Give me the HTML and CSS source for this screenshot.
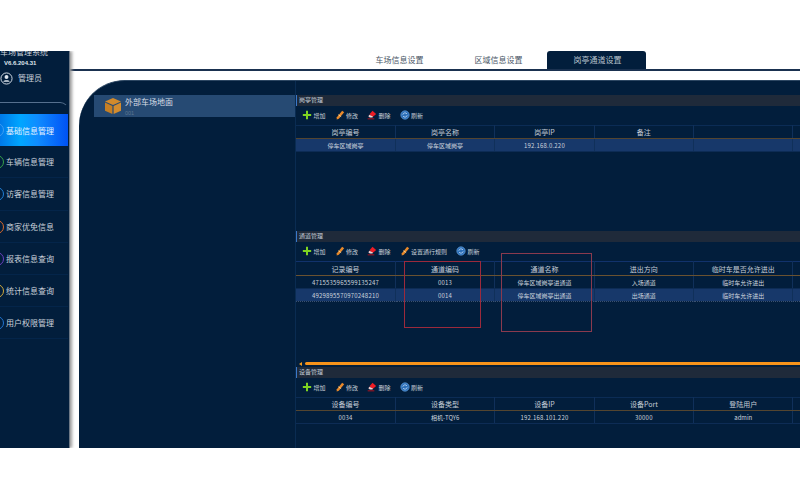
FILE: index.html
```html
<!DOCTYPE html>
<html lang="zh-CN">
<head>
<meta charset="utf-8">
<title>车场管理系统</title>
<link rel="stylesheet" href="styles.css">
</head>
<body>
<svg class="defs" width="0" height="0" aria-hidden="true">
  <symbol id="i-add" viewBox="0 0 12 12"><path d="M4.8 1h2.4v3.8H11v2.4H7.2V11H4.8V7.2H1V4.8h3.8z" fill="#7ed321"/></symbol>
  <symbol id="i-edit" viewBox="0 0 12 12"><path d="M8.6 1 11 2.6 4.6 10.4 2 11.4l.2-2.8z" fill="#e8892a"/><path d="M4 5.600 7.400 8" stroke="#f8d9a0" stroke-width="1"/></symbol>
  <symbol id="i-del" viewBox="0 0 12 12"><path d="M6.600 1 11 4.800 6.800 8.400 3 5z" fill="#ee1c25"/><path d="M3 5.600 1.600 7.600 3.400 9h3l1-1" fill="#f2d0d0"/><path d="M.8 10.600h8" stroke="#d21018" stroke-width="1"/></symbol>
  <symbol id="i-ref" viewBox="0 0 12 12"><circle cx="6" cy="6" r="5" fill="#2c6fb8" stroke="#6aa6e6" stroke-width=".8"/><path d="M3.400 5.600a2.700 2.700 0 0 1 5-.8M8.600 6.400a2.700 2.700 0 0 1-5 .8" fill="none" stroke="#cfe3fb" stroke-width=".9"/></symbol>
</svg>
<div class="page">
  <aside class="side">
    <div class="brand">车场管理系统</div>
    <div class="ver">V6.6.204.31</div>
    <div class="user">
      <svg class="user-ic" viewBox="0 0 14 14"><circle cx="7" cy="7" r="6" fill="none" stroke="#dfe6ee" stroke-width="1"/><circle cx="7" cy="5.400" r="2.100" fill="#dfe6ee"/><path d="M3.600 10.400c.6-2 6.200-2 6.800 0z" fill="#dfe6ee"/></svg>
      <span>管理员</span>
    </div>
    <nav class="menu">
      <a class="mi on"><i class="ring r1"></i>基础信息管理</a>
      <a class="mi"><i class="ring r2"></i>车辆信息管理</a>
      <a class="mi"><i class="ring r3"></i>访客信息管理</a>
      <a class="mi"><i class="ring r4"></i>商家优免信息</a>
      <a class="mi"><i class="ring r5"></i>报表信息查询</a>
      <a class="mi"><i class="ring r6"></i>统计信息查询</a>
      <a class="mi"><i class="ring r7"></i>用户权限管理</a>
    </nav>
  </aside>
  <main class="main">
    <div class="tabs">
      <a class="tab">车场信息设置</a>
      <a class="tab">区域信息设置</a>
      <a class="tab act">岗亭通道设置</a>
    </div>
    <div class="panel">
      <div class="tree">
        <div class="node">
          <svg class="cube" viewBox="0 0 16 16"><path d="M8 0 16 3.500 8 7 0 3.500z" fill="#d28a2c"/><path d="M0 4.500 7.400 8v8L0 12.800z" fill="#c67f24"/><path d="M16 4.500 8.600 8v8l7.400-3.200z" fill="#d48c2e"/></svg>
          <div>
            <div class="node-t">外部车场地面</div>
            <div class="node-s">001</div>
          </div>
        </div>
      </div>
      <div class="right">
        <section class="sec s1">
          <h2 class="st">岗亭管理</h2>
          <div class="tb">
            <span class="b"><svg><use href="#i-add"/></svg>增加</span>
            <span class="b"><svg><use href="#i-edit"/></svg>修改</span>
            <span class="b"><svg><use href="#i-del"/></svg>删除</span>
            <span class="b"><svg><use href="#i-ref"/></svg>刷新</span>
          </div>
          <table class="gr">
            <thead><tr><th>岗亭编号</th><th>岗亭名称</th><th>岗亭IP</th><th>备注</th><th></th><th class="fill"></th></tr></thead>
            <tbody><tr class="sel"><td>停车区域岗亭</td><td>停车区域岗亭</td><td class="num">192.168.0.220</td><td></td><td></td><td class="fill"></td></tr></tbody>
          </table>
        </section>
        <section class="sec s2">
          <h2 class="st">通道管理</h2>
          <div class="tb">
            <span class="b"><svg><use href="#i-add"/></svg>增加</span>
            <span class="b"><svg><use href="#i-edit"/></svg>修改</span>
            <span class="b"><svg><use href="#i-del"/></svg>删除</span>
            <span class="b"><svg><use href="#i-edit"/></svg>设置通行规则</span>
            <span class="b"><svg><use href="#i-ref"/></svg>刷新</span>
          </div>
          <table class="gr">
            <thead><tr><th>记录编号</th><th>通道编码</th><th>通道名称</th><th>进出方向</th><th>临时车是否允许进出</th><th class="fill"></th></tr></thead>
            <tbody>
              <tr><td class="num">4715535965599135247</td><td class="num">0013</td><td>停车区域岗亭进通道</td><td>入场通道</td><td>临时车允许进出</td><td class="fill"></td></tr>
              <tr class="sel"><td class="num">4929895570970248210</td><td class="num">0014</td><td>停车区域岗亭出通道</td><td>出场通道</td><td>临时车允许进出</td><td class="fill"></td></tr>
            </tbody>
          </table>
        </section>
        <div class="split"><i class="arr"></i><i class="bar"></i></div>
        <section class="sec s3">
          <h2 class="st">设备管理</h2>
          <div class="tb">
            <span class="b"><svg><use href="#i-add"/></svg>增加</span>
            <span class="b"><svg><use href="#i-edit"/></svg>修改</span>
            <span class="b"><svg><use href="#i-del"/></svg>删除</span>
            <span class="b"><svg><use href="#i-ref"/></svg>刷新</span>
          </div>
          <table class="gr">
            <thead><tr><th>设备编号</th><th>设备类型</th><th>设备IP</th><th>设备Port</th><th>登陆用户</th><th class="fill"></th></tr></thead>
            <tbody><tr><td class="num">0034</td><td>相机-TQY6</td><td class="num">192.168.101.220</td><td class="num">30000</td><td>admin</td><td class="fill"></td></tr></tbody>
          </table>
        </section>
      </div>
      <div class="mark m-red"></div>
      <div class="mark m-gray"></div>
    </div>
  </main>
</div>
</body>
</html>
```

FILE: styles.css
```css
* { box-sizing: border-box; }
html, body { margin: 0; height: 100%; background: #fff; overflow: hidden; }
body { font-family: "Noto Sans CJK SC", "Liberation Sans", sans-serif; color: #d5dce4; }
.defs { position: absolute; }
.page { margin-top: 51px; height: 397px; display: flex; overflow: hidden; }

.side { width: 70px; flex: none; background: #021e3c; box-shadow: 2px 0 3px #9a9a9a; position: relative; z-index: 1; overflow: hidden; border-right: 1px solid #6d7885; }
.brand { width: 70px; font-size: 8px; line-height: 10px; height: 6px; color: #ccd3db; white-space: nowrap; transform: translateY(-4px); }
.ver { font-size: 6px; line-height: 8px; margin-top: 2px; padding-left: 4px; color: #dfe5ec; font-family: "Liberation Sans", sans-serif; font-weight: 700; }
.user { display: flex; align-items: center; gap: 5px; font-size: 8px; line-height: 14px; margin-top: 4px; color: #ccd3db; }
.user-ic { width: 13px; height: 13px; }
.menu { margin-top: 17px; padding-top: 11px; border-top: 1px solid #56708e; border-top-right-radius: 9px; border-right: 1px solid transparent; display: flex; flex-direction: column; }
.mi { display: flex; align-items: center; height: 32.200px; font-size: 8px; padding-left: 6px; color: #c9d1da; position: relative; white-space: nowrap; border-bottom: 1px solid #04254a; }
.mi.on { background: linear-gradient(90deg, #0079e8 0%, #00a6ff 30%, #0f8cff 55%, #0052f5 100%); color: #e6f2ff; border-bottom: 0; }
.ring { position: absolute; left: -10px; top: 9px; width: 14px; height: 14px; border-radius: 50%; border: 1px solid; }
.r1 { border-color: #3d9cf0; }
.r2 { border-color: #36a04a; }
.r3 { border-color: #1f7fd6; }
.r4 { border-color: #d9682a; }
.r5 { border-color: #6a3fc0; }
.r6 { border-color: #d0a83a; }
.r7 { border-color: #1f74d0; }

.main { flex: 1; min-width: 0; display: flex; flex-direction: column; padding-left: 9px; }
.tabs { height: 20px; margin-left: -9px; flex: none; display: flex; padding-left: 279px; border-bottom: 2px solid #1a3150; }
.tab { width: 99px; font-size: 8px; line-height: 17px; padding-left: 2px; text-align: center; color: #4a5666; }
.tab.act { background: #021e3c; color: #b9c2cd; border-radius: 3px 3px 0 0; }
.panel { margin-top: 9px; flex: 1; background: #021e3c; border-top-left-radius: 46px; display: flex; position: relative; border-top: 1px solid #2d4763; overflow: hidden; }

.tree { width: 216px; flex: none; padding: 14px 0 0 15px; }
.node { height: 22px; width: 201px; background: #264a73; display: flex; gap: 4px; padding: 3px 0 0 11px; }
.cube { width: 16px; height: 16px; flex: none; }
.node-t { font-size: 8px; line-height: 9px; margin-top: -1px; color: #d6dde5; }
.node-s { font-size: 5.500px; line-height: 8px; margin-top: 3px; color: #5f7690; font-family: "Liberation Sans", sans-serif; }

.right { flex: 1; min-width: 0; position: relative; display: flex; flex-direction: column; padding-top: 14px; border-left: 1px solid #0a2c52; }
.sec { display: flex; flex-direction: column; }
.s1 { height: 136px; }
.s2 { height: 131px; }
.st { margin: 0; height: 11px; font-size: 6px; font-weight: 400; line-height: 10px; padding-left: 2px; background: #1f2a3a; color: #c6ced7; border-left: 1px solid #3a78c9; }
.tb { height: 19px; display: flex; align-items: center; gap: 9px; padding: 0 0 1px 6px; font-size: 6px; color: #c9d1da; }
.b { display: flex; align-items: center; gap: 1.500px; white-space: nowrap; }
.b svg { width: 10px; height: 10px; }
.gr { border-collapse: collapse; table-layout: fixed; width: 504px; }
.gr th, .gr td { width: 99.400px; text-align: center; padding: 0; border-right: 1px solid #10305a; overflow: hidden; white-space: nowrap; }
.gr .fill { width: 7px; border-right: 0; }
.gr th { height: 13px; font-size: 7px; font-weight: 400; color: #c4ccd6; border-bottom: 1px solid #54452f; border-top: 1px solid #0b2c55; }
.s2 .gr th { height: 14px; border-top-color: #11326c; border-bottom-color: #6a5230; }
.gr td { height: 13px; font-size: 6px; color: #ccd4dd; border-bottom: 1px solid #0d2c55; }
.gr .num { letter-spacing: .2px; }
.gr .sel td { background: #17386a; }
.s2 .gr .sel td { border-top: 1px dotted #3a5070; border-bottom: 1px dotted #3a5070; }

.split { height: 5px; display: flex; align-items: flex-start; gap: 2px; padding-left: 3px; }
.arr { width: 0; height: 0; border: 2px solid transparent; border-right: 3px solid #f39a1e; border-left: 0; }
.bar { flex: 1; height: 3px; background: #f7931a; border-radius: 2px 0 0 2px; margin-left: 1px; }

.mark { position: absolute; pointer-events: none; }
.m-red { left: 325px; top: 180px; width: 77px; height: 67px; border: 1px solid #9c2a3c; }
.m-gray { left: 422px; top: 172px; width: 91px; height: 79px; border: 1px solid #8a3a4e; }
```
